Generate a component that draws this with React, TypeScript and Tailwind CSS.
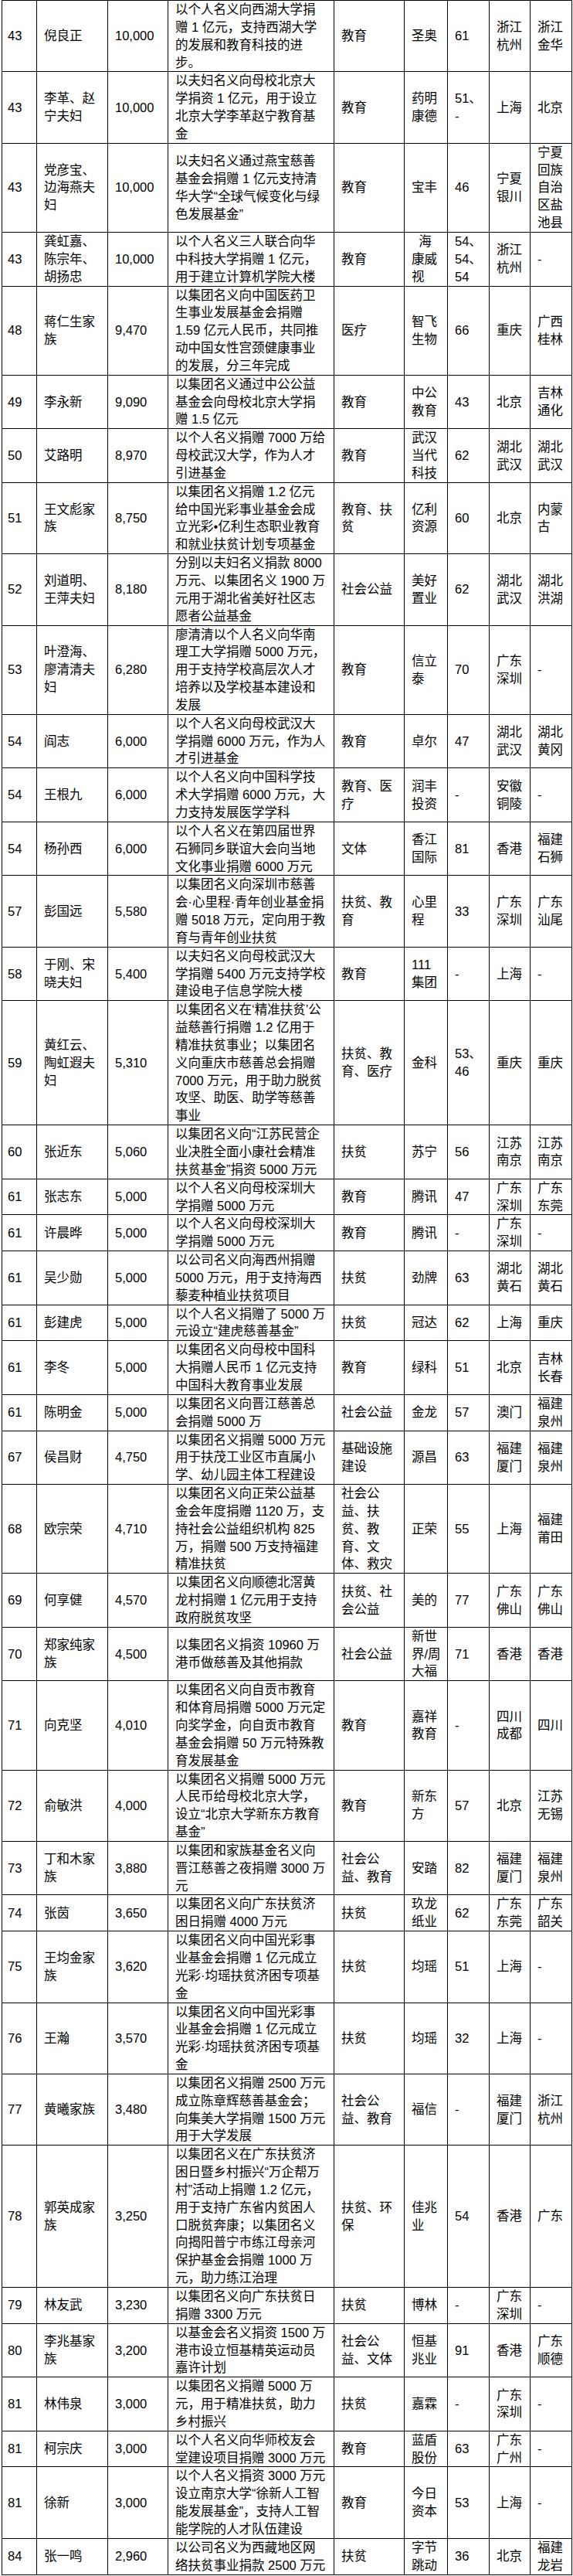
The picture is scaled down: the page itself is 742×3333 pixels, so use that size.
type Row = {
  rank: string;
  name: string[];
  amount: string;
  desc: string[];
  cat: string[];
  company: string[];
  age: string[];
  loc: string[];
  origin: string[];
};

const rows: Row[] = [
  { rank: "43", name: ["倪良正"], amount: "10,000", desc: ["以个人名义向西湖大学捐", "赠 1 亿元，支持西湖大学", "的发展和教育科技的进", "步。"], cat: ["教育"], company: ["圣奥"], age: ["61"], loc: ["浙江", "杭州"], origin: ["浙江", "金华"] },
  { rank: "43", name: ["李革、赵", "宁夫妇"], amount: "10,000", desc: ["以夫妇名义向母校北京大", "学捐资 1 亿元，用于设立", "北京大学李革赵宁教育基", "金"], cat: ["教育"], company: ["药明", "康德"], age: ["51、", "-"], loc: ["上海"], origin: ["北京"] },
  { rank: "43", name: ["党彦宝、", "边海燕夫", "妇"], amount: "10,000", desc: ["以夫妇名义通过燕宝慈善", "基金会捐赠 1 亿元支持清", "华大学“全球气候变化与绿", "色发展基金”"], cat: ["教育"], company: ["宝丰"], age: ["46"], loc: ["宁夏", "银川"], origin: ["宁夏", "回族", "自治", "区盐", "池县"] },
  { rank: "43", name: ["龚虹嘉、", "陈宗年、", "胡扬忠"], amount: "10,000", desc: ["以个人名义三人联合向华", "中科技大学捐赠 1 亿元，", "用于建立计算机学院大楼"], cat: ["教育"], company: ["  海", "康威", "视"], age: ["54、", "54、", "54"], loc: ["浙江", "杭州"], origin: ["-"] },
  { rank: "48", name: ["蒋仁生家", "族"], amount: "9,470", desc: ["以集团名义向中国医药卫", "生事业发展基金会捐赠", "1.59 亿元人民币，共同推", "动中国女性宫颈健康事业", "的发展，分三年完成"], cat: ["医疗"], company: ["智飞", "生物"], age: ["66"], loc: ["重庆"], origin: ["广西", "桂林"] },
  { rank: "49", name: ["李永新"], amount: "9,090", desc: ["以集团名义通过中公公益", "基金会向母校北京大学捐", "赠 1.5 亿元"], cat: ["教育"], company: ["中公", "教育"], age: ["43"], loc: ["北京"], origin: ["吉林", "通化"] },
  { rank: "50", name: ["艾路明"], amount: "8,970", desc: ["以个人名义捐赠 7000 万给", "母校武汉大学，作为人才", "引进基金"], cat: ["教育"], company: ["武汉", "当代", "科技"], age: ["62"], loc: ["湖北", "武汉"], origin: ["湖北", "武汉"] },
  { rank: "51", name: ["王文彪家", "族"], amount: "8,750", desc: ["以集团名义捐赠 1.2 亿元", "给中国光彩事业基金会成", "立光彩•亿利生态职业教育", "和就业扶贫计划专项基金"], cat: ["教育、扶", "贫"], company: ["亿利", "资源"], age: ["60"], loc: ["北京"], origin: ["内蒙", "古"] },
  { rank: "52", name: ["刘道明、", "王萍夫妇"], amount: "8,180", desc: ["分别以夫妇名义捐款 8000", "万元、以集团名义 1900 万", "元用于湖北省美好社区志", "愿者公益基金"], cat: ["社会公益"], company: ["美好", "置业"], age: ["62"], loc: ["湖北", "武汉"], origin: ["湖北", "洪湖"] },
  { rank: "53", name: ["叶澄海、", "廖清清夫", "妇"], amount: "6,280", desc: ["廖清清以个人名义向华南", "理工大学捐赠 5000 万元，", "用于支持学校高层次人才", "培养以及学校基本建设和", "发展"], cat: ["教育"], company: ["信立", "泰"], age: ["70"], loc: ["广东", "深圳"], origin: ["-"] },
  { rank: "54", name: ["阎志"], amount: "6,000", desc: ["以个人名义向母校武汉大", "学捐赠 6000 万元，作为人", "才引进基金"], cat: ["教育"], company: ["卓尔"], age: ["47"], loc: ["湖北", "武汉"], origin: ["湖北", "黄冈"] },
  { rank: "54", name: ["王根九"], amount: "6,000", desc: ["以个人名义向中国科学技", "术大学捐赠 6000 万元，大", "力支持发展医学学科"], cat: ["教育、医", "疗"], company: ["润丰", "投资"], age: ["-"], loc: ["安徽", "铜陵"], origin: ["-"] },
  { rank: "54", name: ["杨孙西"], amount: "6,000", desc: ["以个人名义在第四届世界", "石狮同乡联谊大会向当地", "文化事业捐赠 6000 万元"], cat: ["文体"], company: ["香江", "国际"], age: ["81"], loc: ["香港"], origin: ["福建", "石狮"] },
  { rank: "57", name: ["彭国远"], amount: "5,580", desc: ["以集团名义向深圳市慈善", "会·心里程·青年创业基金捐", "赠 5018 万元，定向用于教", "育与青年创业扶贫"], cat: ["扶贫、教", "育"], company: ["心里", "程"], age: ["33"], loc: ["广东", "深圳"], origin: ["广东", "汕尾"] },
  { rank: "58", name: ["于刚、宋", "晓夫妇"], amount: "5,400", desc: ["以夫妇名义向母校武汉大", "学捐赠 5400 万元支持学校", "建设电子信息学院大楼"], cat: ["教育"], company: ["111", "集团"], age: ["-"], loc: ["上海"], origin: ["-"] },
  { rank: "59", name: ["黄红云、", "陶虹遐夫", "妇"], amount: "5,310", desc: ["以集团名义在‘精准扶贫’公", "益慈善行捐赠 1.2 亿用于", "精准扶贫事业；以集团名", "义向重庆市慈善总会捐赠", "7000 万元，用于助力脱贫", "攻坚、助医、助学等慈善", "事业"], cat: ["扶贫、教", "育、医疗"], company: ["金科"], age: ["53、", "46"], loc: ["重庆"], origin: ["重庆"] },
  { rank: "60", name: ["张近东"], amount: "5,060", desc: ["以集团名义向“江苏民营企", "业决胜全面小康社会精准", "扶贫基金”捐资 5000 万元"], cat: ["扶贫"], company: ["苏宁"], age: ["56"], loc: ["江苏", "南京"], origin: ["江苏", "南京"] },
  { rank: "61", name: ["张志东"], amount: "5,000", desc: ["以个人名义向母校深圳大", "学捐赠 5000 万元"], cat: ["教育"], company: ["腾讯"], age: ["47"], loc: ["广东", "深圳"], origin: ["广东", "东莞"] },
  { rank: "61", name: ["许晨晔"], amount: "5,000", desc: ["以个人名义向母校深圳大", "学捐赠 5000 万元"], cat: ["教育"], company: ["腾讯"], age: ["-"], loc: ["广东", "深圳"], origin: ["-"] },
  { rank: "61", name: ["吴少勋"], amount: "5,000", desc: ["以公司名义向海西州捐赠", "5000 万元，用于支持海西", "藜麦种植业扶贫项目"], cat: ["扶贫"], company: ["劲牌"], age: ["63"], loc: ["湖北", "黄石"], origin: ["湖北", "黄石"] },
  { rank: "61", name: ["彭建虎"], amount: "5,000", desc: ["以个人名义捐赠了 5000 万", "元设立“建虎慈善基金”"], cat: ["扶贫"], company: ["冠达"], age: ["62"], loc: ["上海"], origin: ["重庆"] },
  { rank: "61", name: ["李冬"], amount: "5,000", desc: ["以集团名义向母校中国科", "大捐赠人民币 1 亿元支持", "中国科大教育事业发展"], cat: ["教育"], company: ["绿科"], age: ["51"], loc: ["北京"], origin: ["吉林", "长春"] },
  { rank: "61", name: ["陈明金"], amount: "5,000", desc: ["以集团名义向晋江慈善总", "会捐赠 5000 万"], cat: ["社会公益"], company: ["金龙"], age: ["57"], loc: ["澳门"], origin: ["福建", "泉州"] },
  { rank: "67", name: ["侯昌财"], amount: "4,750", desc: ["以集团名义捐赠 5000 万元", "用于扶茂工业区市直属小", "学、幼儿园主体工程建设"], cat: ["基础设施", "建设"], company: ["源昌"], age: ["63"], loc: ["福建", "厦门"], origin: ["福建", "泉州"] },
  { rank: "68", name: ["欧宗荣"], amount: "4,710", desc: ["以集团名义向正荣公益基", "金会年度捐赠 1120 万，支", "持社会公益组织机构 825", "万，捐赠 500 万支持福建", "精准扶贫"], cat: ["社会公", "益、扶", "贫、教", "育、文", "体、救灾"], company: ["正荣"], age: ["55"], loc: ["上海"], origin: ["福建", "莆田"] },
  { rank: "69", name: ["何享健"], amount: "4,570", desc: ["以集团名义向顺德北滘黄", "龙村捐赠 1 亿元用于支持", "政府脱贫攻坚"], cat: ["扶贫、社", "会公益"], company: ["美的"], age: ["77"], loc: ["广东", "佛山"], origin: ["广东", "佛山"] },
  { rank: "70", name: ["郑家纯家", "族"], amount: "4,500", desc: ["以集团名义捐资 10960 万", "港币做慈善及其他捐款"], cat: ["社会公益"], company: ["新世", "界/周", "大福"], age: ["71"], loc: ["香港"], origin: ["香港"] },
  { rank: "71", name: ["向克坚"], amount: "4,010", desc: ["以集团名义向自贡市教育", "和体育局捐赠 5000 万元定", "向奖学金，向自贡市教育", "基金会捐赠 50 万元特殊教", "育发展基金"], cat: ["教育"], company: ["嘉祥", "教育"], age: ["-"], loc: ["四川", "成都"], origin: ["四川"] },
  { rank: "72", name: ["俞敏洪"], amount: "4,000", desc: ["以集团名义捐赠 5000 万元", "人民币给母校北京大学，", "设立“北京大学新东方教育", "基金”"], cat: ["教育"], company: ["新东", "方"], age: ["57"], loc: ["北京"], origin: ["江苏", "无锡"] },
  { rank: "73", name: ["丁和木家", "族"], amount: "3,880", desc: ["以集团和家族基金名义向", "晋江慈善之夜捐赠 3000 万", "元"], cat: ["社会公", "益、教育"], company: ["安踏"], age: ["82"], loc: ["福建", "厦门"], origin: ["福建", "泉州"] },
  { rank: "74", name: ["张茵"], amount: "3,650", desc: ["以集团名义向广东扶贫济", "困日捐赠 4000 万元"], cat: ["扶贫"], company: ["玖龙", "纸业"], age: ["62"], loc: ["广东", "东莞"], origin: ["广东", "韶关"] },
  { rank: "75", name: ["王均金家", "族"], amount: "3,620", desc: ["以集团名义向中国光彩事", "业基金会捐赠 1 亿元成立", "光彩·均瑶扶贫济困专项基", "金"], cat: ["扶贫"], company: ["均瑶"], age: ["51"], loc: ["上海"], origin: ["-"] },
  { rank: "76", name: ["王瀚"], amount: "3,570", desc: ["以集团名义向中国光彩事", "业基金会捐赠 1 亿元成立", "光彩·均瑶扶贫济困专项基", "金"], cat: ["扶贫"], company: ["均瑶"], age: ["32"], loc: ["上海"], origin: ["-"] },
  { rank: "77", name: ["黄曦家族"], amount: "3,480", desc: ["以集团名义捐赠 2500 万元", "成立陈章辉慈善基金会；", "向集美大学捐赠 1500 万元", "用于大学发展"], cat: ["社会公", "益、教育"], company: ["福信"], age: ["-"], loc: ["福建", "厦门"], origin: ["浙江", "杭州"] },
  { rank: "78", name: ["郭英成家", "族"], amount: "3,250", desc: ["以集团名义在广东扶贫济", "困日暨乡村振兴“万企帮万", "村”活动上捐赠 1.2 亿元，", "用于支持广东省内贫困人", "口脱贫奔康；以集团名义", "向揭阳普宁市练江母亲河", "保护基金会捐赠 1000 万", "元，助力练江治理"], cat: ["扶贫、环", "保"], company: ["佳兆", "业"], age: ["54"], loc: ["香港"], origin: ["广东"] },
  { rank: "79", name: ["林友武"], amount: "3,230", desc: ["以集团名义向广东扶贫日", "捐赠 3300 万元"], cat: ["扶贫"], company: ["博林"], age: ["-"], loc: ["广东", "深圳"], origin: ["-"] },
  { rank: "80", name: ["李兆基家", "族"], amount: "3,200", desc: ["以基金会名义捐资 1500 万", "港市设立恒基精英运动员", "嘉许计划"], cat: ["社会公", "益、文体"], company: ["恒基", "兆业"], age: ["91"], loc: ["香港"], origin: ["广东", "顺德"] },
  { rank: "81", name: ["林伟泉"], amount: "3,000", desc: ["以集团名义捐赠 5000 万", "元，用于精准扶贫，助力", "乡村振兴"], cat: ["扶贫"], company: ["嘉霖"], age: ["-"], loc: ["广东", "深圳"], origin: ["-"] },
  { rank: "81", name: ["柯宗庆"], amount: "3,000", desc: ["以个人名义向华师校友会", "堂建设项目捐赠 3000 万元"], cat: ["教育"], company: ["蓝盾", "股份"], age: ["63"], loc: ["广东", "广州"], origin: ["-"] },
  { rank: "81", name: ["徐新"], amount: "3,000", desc: ["以个人名义捐资 3000 万元", "设立南京大学“徐新人工智", "能发展基金”，支持人工智", "能学院的人才队伍建设"], cat: ["教育"], company: ["今日", "资本"], age: ["53"], loc: ["上海"], origin: ["-"] },
  { rank: "84", name: ["张一鸣"], amount: "2,960", desc: ["以公司名义为西藏地区网", "络扶贫事业捐款 2500 万元"], cat: ["扶贫"], company: ["字节", "跳动"], age: ["36"], loc: ["北京"], origin: ["福建", "龙岩"] },
];

function Cell({ lines, first }: { lines: string[]; first?: boolean }) {
  return (
    <div className={first ? "flex flex-col justify-center border-r border-black pl-[7px]" : "flex flex-col justify-center border-r border-black pl-[9px]"}>
      {lines.map((l, i) => (
        <span key={i} className="block whitespace-pre">
          {l}
        </span>
      ))}
    </div>
  );
}

export default function App() {
  return (
    <div className="min-h-screen w-[742px] bg-white text-black font-['Liberation_Sans','Noto_Sans_CJK_SC',sans-serif] text-[16.5px] leading-[22.85px]">
      <div className="ml-[2px] w-[739px] border-l border-t border-black">
        {rows.map((r, i) => (
          <div
            key={i}
            className="grid grid-cols-[45px_92px_78px_215px_91px_56px_54px_53px_54px] border-b border-black"
          >
            <Cell lines={[r.rank]} first />
            <Cell lines={r.name} />
            <Cell lines={[r.amount]} />
            <Cell lines={r.desc} />
            <Cell lines={r.cat} />
            <Cell lines={r.company} />
            <Cell lines={r.age} />
            <Cell lines={r.loc} />
            <Cell lines={r.origin} />
          </div>
        ))}
      </div>
    </div>
  );
}
